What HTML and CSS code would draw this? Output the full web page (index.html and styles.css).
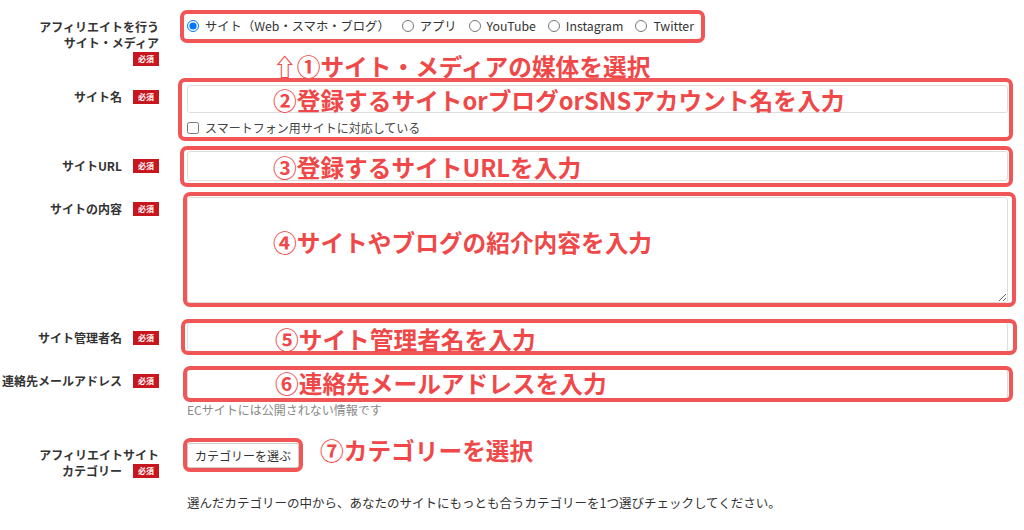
FILE: index.html
```html
<!DOCTYPE html>
<html lang="ja">
<head>
    <meta charset="UTF-8">
    <meta name="viewport" content="width=device-width, initial-scale=1.0">
    <title>サイト情報の登録</title>
    <link rel="stylesheet" href="styles.css">
</head>
<body>
    <form class="form">
        <div class="row row-media">
            <div class="label">アフィリエイトを行う<br>サイト・メディア<br><span class="req">必須</span></div>
            <div class="field">
                <div class="radios">
                    <label class="radio"><input type="radio" name="media" checked>サイト（Web・スマホ・ブログ）</label>
                    <label class="radio"><input type="radio" name="media">アプリ</label>
                    <label class="radio"><input type="radio" name="media">YouTube</label>
                    <label class="radio"><input type="radio" name="media">Instagram</label>
                    <label class="radio"><input type="radio" name="media">Twitter</label>
                </div>
                <span class="mark mark-media"></span>
                <p class="hint hint-media">⇧①サイト・メディアの媒体を選択</p>
            </div>
        </div>

        <div class="row row-name">
            <div class="label">サイト名<span class="req">必須</span></div>
            <div class="field">
                <input type="text" class="text text-name">
                <label class="check"><input type="checkbox">スマートフォン用サイトに対応している</label>
                <span class="mark mark-name"></span>
                <p class="hint hint-name">②登録するサイトorブログorSNSアカウント名を入力</p>
            </div>
        </div>

        <div class="row row-url">
            <div class="label">サイトURL<span class="req">必須</span></div>
            <div class="field">
                <input type="text" class="text">
                <span class="mark mark-url"></span>
                <p class="hint hint-url">③登録するサイトURLを入力</p>
            </div>
        </div>

        <div class="row row-body">
            <div class="label">サイトの内容<span class="req">必須</span></div>
            <div class="field">
                <textarea class="area"></textarea>
                <span class="mark mark-body"></span>
                <p class="hint hint-body">④サイトやブログの紹介内容を入力</p>
            </div>
        </div>

        <div class="row row-admin">
            <div class="label">サイト管理者名<span class="req">必須</span></div>
            <div class="field">
                <input type="text" class="text">
                <span class="mark mark-admin"></span>
                <p class="hint hint-admin">⑤サイト管理者名を入力</p>
            </div>
        </div>

        <div class="row row-mail">
            <div class="label">連絡先メールアドレス<span class="req">必須</span></div>
            <div class="field">
                <input type="text" class="text">
                <p class="note">ECサイトには公開されない情報です</p>
                <span class="mark mark-mail"></span>
                <p class="hint hint-mail">⑥連絡先メールアドレスを入力</p>
            </div>
        </div>

        <div class="row row-cat">
            <div class="label">アフィリエイトサイト<br>カテゴリー<span class="req">必須</span></div>
            <div class="field">
                <button type="button" class="pick">カテゴリーを選ぶ</button>
                <span class="mark mark-cat"></span>
                <p class="hint hint-cat">⑦カテゴリーを選択</p>
            </div>
        </div>

        <p class="guide">選んだカテゴリーの中から、あなたのサイトにもっとも合うカテゴリーを1つ選びチェックしてください。</p>
    </form>
</body>
</html>
```

FILE: styles.css
```css
body {
    margin: 0;
    font-family: "Noto Sans CJK JP", "Noto Sans", sans-serif;
    color: #333;
    background: #fff;
}
.form {
    padding: 0 16px 0 0;
}
.row {
    display: grid;
    grid-template-columns: 159px 1fr;
    column-gap: 28px;
    align-items: start;
}
.label {
    font-size: 12px;
    font-weight: bold;
    line-height: 16px;
    text-align: right;
    color: #333;
}
.req {
    display: inline-block;
    width: 26px;
    height: 14px;
    line-height: 14px;
    margin: 1px 0 0 11px;
    vertical-align: top;
    background: #c8161e;
    color: #fff;
    font-size: 8px;
    font-weight: bold;
    text-align: center;
}
.field {
    position: relative;
}
.text {
    display: block;
    width: 100%;
    height: 30px;
    box-sizing: border-box;
    border: 1px solid #ddd;
    border-radius: 3px;
    background: #fff;
    margin: 0;
}
.area {
    display: block;
    width: 100%;
    height: 106px;
    box-sizing: border-box;
    border: 1px solid #ddd;
    border-radius: 3px;
    margin: 0;
}

/* rows */
.row-media {
    margin-top: 18px;
}
.row-media .label {
    padding-top: 1px;
}
.radios {
    display: flex;
    gap: 12px;
    font-size: 12.3px;
    line-height: 16px;
}
.radio {
    display: flex;
    align-items: center;
    white-space: nowrap;
}
.radio input {
    width: 12px;
    height: 12px;
    margin: 0 6px 0 0;
}
.row-name {
    margin-top: 18px;
}
.row-name .label {
    padding-top: 4px;
}
.text-name {
    height: 28px;
}
.check {
    display: flex;
    align-items: center;
    margin-top: 7px;
    font-size: 12px;
    line-height: 16px;
    color: #444;
}
.check input {
    width: 12px;
    height: 12px;
    margin: 0 6px 0 0;
}
.row-url {
    margin-top: 15px;
}
.row-url .label {
    padding-top: 7px;
}
.row-body {
    margin-top: 16px;
}
.row-body .label {
    padding-top: 4px;
}
.row-admin {
    margin-top: 19px;
}
.row-admin .label {
    padding-top: 8px;
}
.row-mail {
    margin-top: 17px;
}
.row-mail .label {
    padding-top: 4px;
}
.note {
    margin: 3px 0 0;
    font-size: 12px;
    line-height: 16px;
    color: #888;
}
.row-cat {
    margin-top: 25px;
}
.row-cat .label {
    padding-top: 4px;
}
.pick {
    display: block;
    height: 25px;
    padding: 0 7px;
    border: 1px solid #ccc;
    border-radius: 2px;
    background: #fff;
    box-shadow: 1px 1px 2px rgba(0, 0, 0, 0.15);
    font-family: inherit;
    font-size: 12px;
    color: #333;
}
.guide {
    margin: 15px 0 0 187px;
    font-size: 12.5px;
    line-height: 18px;
    color: #333;
}

/* red annotation frames */
.mark {
    position: absolute;
    box-sizing: border-box;
    border: 4px solid #f15555;
    border-radius: 7px;
    pointer-events: none;
}
.mark-media {
    left: -7px;
    top: -8px;
    width: 525px;
    height: 33px;
}
.mark-name {
    left: -9px;
    top: -7px;
    right: -5px;
    bottom: -5px;
}
.mark-url {
    left: -7px;
    top: -5px;
    right: -5px;
    bottom: -6px;
}
.mark-body {
    left: -4px;
    top: -5px;
    right: -8px;
    bottom: -4px;
}
.mark-admin {
    left: -6px;
    top: -3px;
    right: -9px;
    bottom: -3px;
}
.mark-mail {
    left: -4px;
    top: -3px;
    right: -5px;
    height: 36px;
}
.mark-cat {
    left: -4px;
    top: -5px;
    width: 120px;
    height: 34px;
}

/* red annotation captions */
.hint {
    position: absolute;
    left: 86px;
    margin: 0;
    font-size: 23.7px;
    font-weight: bold;
    line-height: 28px;
    color: #f04848;
    white-space: nowrap;
    pointer-events: none;
}
.hint-media {
    top: 34px;
}
.hint-name {
    top: 1px;
}
.hint-url {
    top: 2px;
}
.hint-body {
    top: 31px;
}
.hint-admin {
    left: 88px;
    top: 3px;
}
.hint-mail {
    left: 88px;
    top: 0;
}
.hint-cat {
    left: 133px;
    top: -7px;
}
```
